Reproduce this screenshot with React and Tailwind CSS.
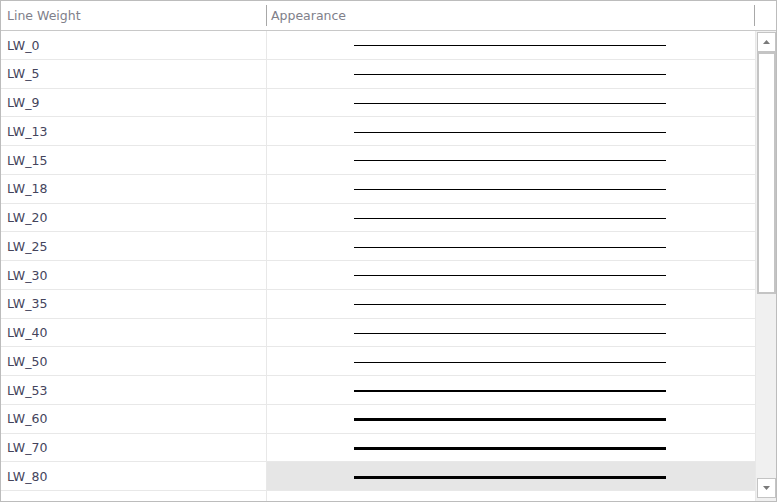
import React from 'react';

const rows = [
  ['LW_0', 1], ['LW_5', 1], ['LW_9', 1], ['LW_13', 1], ['LW_15', 1], ['LW_18', 1],
  ['LW_20', 1], ['LW_25', 1], ['LW_30', 1], ['LW_35', 1], ['LW_40', 1], ['LW_50', 1],
  ['LW_53', 2], ['LW_60', 3], ['LW_70', 3], ['LW_80', 3], ['', 0],
];

const App = () => {
  return (
    <div className="w-[777px] h-[502px] bg-white border border-[#bcbcbc] flex flex-col overflow-hidden text-[12.5px]" style={{ fontFamily: '"DejaVu Sans", Tahoma, sans-serif' }}>
      <div className="h-[30px] shrink-0 flex border-b border-[#c8c8c8] text-[#80808a]">
        <div className="w-[266px] flex items-center pt-[2px] pl-[6px] relative">
          Line Weight
          <div className="absolute right-0 top-[4px] bottom-[4px] w-px bg-[#a8a8a8]" />
        </div>
        <div className="w-[488px] flex items-center pt-[2px] pl-[4px] relative">
          Appearance
          <div className="absolute right-0 top-[4px] bottom-[4px] w-px bg-[#a8a8a8]" />
        </div>
        <div className="flex-1" />
      </div>
      <div className="flex-1 flex min-h-0">
        <div className="w-[754px] overflow-hidden">
          {rows.map(([name, w], i) => (
            <div key={i} className="h-[28.75px] flex border-b border-[#e8e8e8]">
              <div className="w-[266px] border-r border-[#e8e8e8] flex items-center pt-[2px] pl-[6px] text-[#44445c]">{name}</div>
              <div className={`flex-1 flex items-center pt-[2px] pl-[87px] ${i === 15 ? 'bg-[#e6e6e6]' : ''}`}>
                {w > 0 && <div className={`w-[312px] bg-black ${w === 1 ? 'h-px' : w === 2 ? 'h-[2px]' : 'h-[3px]'}`} />}
              </div>
            </div>
          ))}
        </div>
        <div className="flex-1 bg-[#f0f0f0] flex flex-col items-center pt-[1px] pb-[3px] border-l border-[#e8e8e8]">
          <div className="w-[19px] h-[20px] bg-white border border-[#c4c4c4] flex items-center justify-center">
            <svg width="7" height="4" viewBox="0 0 7 4"><path d="M3.5 0 L7 4 L0 4 Z" fill="#7a7a7a" /></svg>
          </div>
          <div className="w-[19px] h-[242px] bg-white border-2 border-[#c4c4c4]" />
          <div className="flex-1" />
          <div className="w-[19px] h-[20px] bg-white border border-[#c4c4c4] flex items-center justify-center">
            <svg width="7" height="4" viewBox="0 0 7 4"><path d="M0 0 L7 0 L3.5 4 Z" fill="#7a7a7a" /></svg>
          </div>
        </div>
      </div>
    </div>
  );
};

export default App;
